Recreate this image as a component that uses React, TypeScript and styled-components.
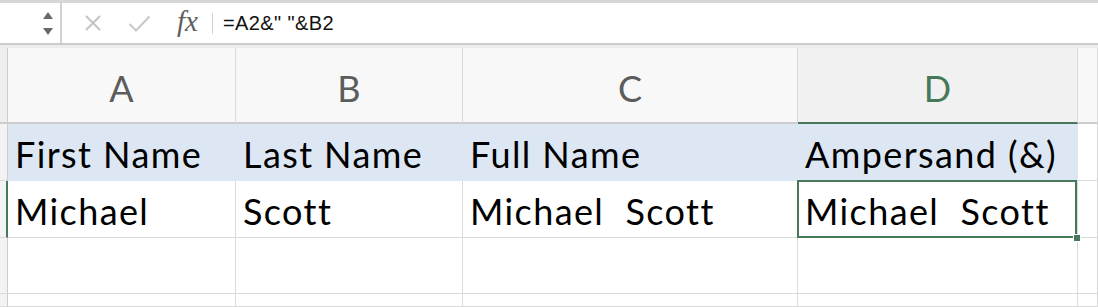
import React from "react";
import styled, { createGlobalStyle, css } from "styled-components";

const GREEN = "#45795a";
const GRID = "#dadada";
const BLUE = "#dde7f3";

const Global = createGlobalStyle`
  html, body { margin: 0; padding: 0; background: #ffffff; overflow: hidden; }
  body { width: 1098px; height: 307px; }
  * { box-sizing: border-box; }
`;

const Page = styled.div`
  width: 1098px;
  height: 307px;
  display: flex;
  flex-direction: column;
  background: #fff;
`;

const FormulaBar = styled.div`
  height: 45px;
  display: flex;
  align-items: stretch;
  border-top: 3px solid #d6d6d6;
  border-bottom: 2px solid #cbcbcb;
  background: #fff;
`;

const NameBox = styled.div`
  width: 62px;
  border-right: 2px solid #d2d2d2;
  display: flex;
  align-items: center;
  justify-content: flex-end;
  padding-right: 7px;
`;

const Spinner = styled.div`
  display: flex;
  flex-direction: column;
  gap: 9px;
`;

const Tri = styled.div<{ $down?: boolean }>`
  width: 0;
  height: 0;
  border-left: 5px solid transparent;
  border-right: 5px solid transparent;
  ${(p) =>
    p.$down
      ? css`border-top: 7px solid #6a6a6a;`
      : css`border-bottom: 7px solid #6a6a6a;`}
`;

const IconSlot = styled.div<{ $w: number; $end?: boolean }>`
  width: ${(p) => p.$w}px;
  display: flex;
  align-items: center;
  justify-content: ${(p) => (p.$end ? "flex-end" : "center")};
  padding-right: ${(p) => (p.$end ? "14px" : "0")};
`;

const Fx = styled.span`
  font-family: "Liberation Serif", "DejaVu Serif", serif;
  font-style: italic;
  font-size: 29px;
  line-height: 1;
  color: #5e5e5e;
  padding-bottom: 3px;
`;

const Separator = styled.div`
  width: 1px;
  background: #d3d3d3;
  margin: 10px 10px 9px 0;
`;

const FormulaText = styled.div`
  display: flex;
  align-items: center;
  font-family: "Liberation Sans", Arial, sans-serif;
  font-size: 20px;
  color: #111;
  letter-spacing: 0.4px;
`;

const Strip = styled.div`
  height: 3px;
  background: #ececec;
`;

const Grid = styled.div`
  flex: 1;
  display: grid;
  grid-template-columns: 8px 228px 227px 335px 280px 1fr;
  grid-template-rows: 76px 57px 57px 56px 1fr;
`;

const Corner = styled.div`
  background: #efefef;
  border-right: 1px solid #cdcdcd;
  border-bottom: 2px solid #cdcdcd;
`;

const ColHead = styled.div<{ $active?: boolean }>`
  background: ${(p) => (p.$active ? "#f1f1f1" : "#f8f8f8")};
  border-right: 1px solid ${GRID};
  border-bottom: 2px solid ${(p) => (p.$active ? GREEN : "#cdcdcd")};
  display: flex;
  align-items: center;
  justify-content: center;
  padding-top: 6px;
  font-family: Lato, "Open Sans", sans-serif;
  font-size: 36px;
  color: ${(p) => (p.$active ? GREEN : "#5c5c5c")};
`;

const RowHead = styled.div<{ $active?: boolean }>`
  background: #f3f3f3;
  border-right: ${(p) => (p.$active ? `2px solid ${GREEN}` : "1px solid #cdcdcd")};
  border-bottom: 1px solid ${GRID};
`;

const Cell = styled.div<{ $fill?: string; $selected?: boolean }>`
  position: relative;
  background: ${(p) => p.$fill ?? "#fff"};
  border-right: 1px solid ${(p) => p.$fill ?? GRID};
  border-bottom: 1px solid ${(p) => p.$fill ?? GRID};
  display: flex;
  align-items: center;
  padding: 4px 0 0 7px;
  font-family: Lato, "Open Sans", sans-serif;
  font-size: 36px;
  letter-spacing: 1.4px;
  color: #000;
  white-space: pre;
  ${(p) =>
    p.$selected &&
    css`
      &::after {
        content: "";
        position: absolute;
        left: -1px;
        top: -1px;
        right: 0;
        bottom: -1px;
        border: 2px solid ${GREEN};
        pointer-events: none;
      }
    `}
`;

const FillHandle = styled.div`
  position: absolute;
  right: -4px;
  bottom: -5px;
  width: 8px;
  height: 8px;
  background: ${GREEN};
  border: 1px solid #fff;
  z-index: 2;
`;

const XIcon = () => (
  <svg width="18" height="16" viewBox="0 0 18 16">
    <path d="M2 1 L16 15 M16 1 L2 15" stroke="#c4c4c4" strokeWidth="2" fill="none" />
  </svg>
);

const CheckIcon = () => (
  <svg width="23" height="17" viewBox="0 0 23 17">
    <path d="M1.5 9 L8 15.5 L21.5 1.5" stroke="#cacaca" strokeWidth="2.2" fill="none" />
  </svg>
);

const columns = ["A", "B", "C", "D"];
const rows: string[][] = [
  ["First Name", "Last Name", "Full Name", "Ampersand (&)"],
  ["Michael", "Scott", "Michael  Scott", "Michael  Scott"],
  ["", "", "", ""],
  ["", "", "", ""],
];

export default function App() {
  return (
    <Page>
      <Global />
      <FormulaBar>
        <NameBox>
          <Spinner>
            <Tri />
            <Tri $down />
          </Spinner>
        </NameBox>
        <IconSlot $w={62}>
          <XIcon />
        </IconSlot>
        <IconSlot $w={30}>
          <CheckIcon />
        </IconSlot>
        <IconSlot $w={58} $end>
          <Fx>fx</Fx>
        </IconSlot>
        <Separator />
        <FormulaText>=A2&amp;" "&amp;B2</FormulaText>
      </FormulaBar>
      <Strip />
      <Grid>
        <Corner />
        {columns.map((c) => (
          <ColHead key={c} $active={c === "D"}>
            {c}
          </ColHead>
        ))}
        <ColHead />
        {rows.map((r, ri) => (
          <React.Fragment key={ri}>
            <RowHead $active={ri === 1} />
            {r.map((v, ci) => (
              <Cell
                key={ci}
                $fill={ri === 0 ? BLUE : undefined}
                $selected={ri === 1 && ci === 3}
              >
                {v}
                {ri === 1 && ci === 3 && <FillHandle />}
              </Cell>
            ))}
            <Cell />
          </React.Fragment>
        ))}
      </Grid>
    </Page>
  );
}
